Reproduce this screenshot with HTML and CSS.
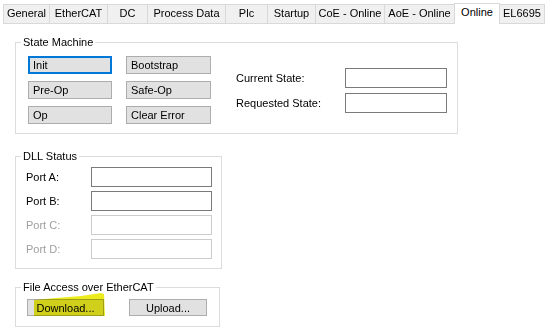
FILE: index.html
```html
<!DOCTYPE html>
<html>
<head>
<meta charset="utf-8">
<link rel="stylesheet" href="styles.css">
</head>
<body>
<div class="tabs">
  <div class="tab t1">General</div>
  <div class="tab t2">EtherCAT</div>
  <div class="tab t3">DC</div>
  <div class="tab t4">Process Data</div>
  <div class="tab t5">Plc</div>
  <div class="tab t6">Startup</div>
  <div class="tab t7">CoE - Online</div>
  <div class="tab t8">AoE - Online</div>
  <div class="tab t9 active">Online</div>
  <div class="tab t10">EL6695</div>
</div>
<div class="panel">
  <fieldset class="group sm">
    <legend>State Machine</legend>
    <div class="sm-body">
      <div class="btn-grid">
        <button class="btn focus">Init</button>
        <button class="btn">Bootstrap</button>
        <button class="btn">Pre-Op</button>
        <button class="btn">Safe-Op</button>
        <button class="btn">Op</button>
        <button class="btn">Clear Error</button>
      </div>
      <div class="state-grid">
        <span class="lbl">Current State:</span><span class="box"></span>
        <span class="lbl">Requested State:</span><span class="box"></span>
      </div>
    </div>
  </fieldset>
  <fieldset class="group dll">
    <legend>DLL Status</legend>
    <div class="port-grid">
      <span class="lbl">Port A:</span><span class="box"></span>
      <span class="lbl">Port B:</span><span class="box"></span>
      <span class="lbl dis">Port C:</span><span class="box dis"></span>
      <span class="lbl dis">Port D:</span><span class="box dis"></span>
    </div>
  </fieldset>
  <fieldset class="group fa">
    <legend>File Access over EtherCAT</legend>
    <div class="fa-row">
      <button class="btn center dl">Download...</button>
      <button class="btn center ul">Upload...</button>
    </div>
    <svg class="marker" width="80" height="30" viewBox="0 0 80 30">
      <polygon points="3,11 25,9 50,7 70,4 73,5 74,27 3,27" fill="#e8e800" opacity="0.88"/>
    </svg>
  </fieldset>
</div>
</body>
</html>
```
FILE: styles.css
```css
* { box-sizing: border-box; }
html, body { margin: 0; padding: 0; background: #ffffff; }
body {
  width: 554px;
  height: 333px;
  overflow: hidden;
  font-family: "Liberation Sans", Arial, sans-serif;
  font-size: 11px;
  color: #000;
}
.tabs {
  display: flex;
  align-items: flex-end;
  height: 24px;
  padding-left: 3px;
}
.tab {
  height: 20px;
  margin-left: -1px;
  border: 1px solid #d9d9d9;
  background: #f0f0f0;
  text-align: center;
  line-height: 17px;
  white-space: nowrap;
}
.tab:first-child { margin-left: 0; }
.t1 { width: 47px; }
.t2 { width: 59px; }
.t3 { width: 41px; }
.t4 { width: 79px; }
.t5 { width: 43px; }
.t6 { width: 49px; }
.t7 { width: 70px; }
.t8 { width: 71px; }
.t9 { width: 46px; }
.t10 { width: 46px; }
.tab.active {
  position: relative;
  height: 21px;
  background: #fff;
  border-bottom: none;
  line-height: 16px;
  z-index: 1;
}
.panel {
  padding: 12px 0 0 15px;
  display: flex;
  flex-direction: column;
  align-items: flex-start;
}
.group {
  margin: 0;
  border: 1px solid #dcdcdc;
  min-width: 0;
  position: relative;
}
.group legend {
  padding: 0 2px;
  line-height: 13px;
  height: 13px;
}
.sm {
  width: 443px;
  padding: 7px 12px 9px 12px;
}
.sm legend { margin-left: -7px; }
.sm-body {
  display: flex;
  align-items: center;
}
.btn-grid {
  display: grid;
  grid-template-columns: 84px 85px;
  column-gap: 14px;
  row-gap: 7px;
}
.btn {
  font: inherit;
  color: #000;
  height: 18px;
  padding: 0 4px;
  margin: 0;
  background: #e1e1e1;
  border: 1px solid #adadad;
  text-align: left;
  line-height: 15px;
}
.btn.focus {
  border: 2px solid #0078d7;
  padding-left: 3px;
}
.btn.center { text-align: center; }
.state-grid {
  margin-left: 25px;
  display: grid;
  grid-template-columns: 109px 102px;
  row-gap: 5px;
  align-items: center;
}
.box {
  display: block;
  height: 20px;
  border: 1px solid #7a7a7a;
  background: #fff;
}
.box.dis { border-color: #cccccc; }
.lbl.dis { color: #a0a0a0; }
.dll {
  width: 207px;
  margin-top: 16px;
  padding: 4px 9px 9px 10px;
}
.dll legend { margin-left: -5px; }
.port-grid {
  display: grid;
  grid-template-columns: 65px 121px;
  row-gap: 4px;
  align-items: center;
}
.fa {
  width: 205px;
  margin-top: 12px;
  padding: 5px 10px 10px 11px;
}
.fa legend { margin-left: -6px; }
.fa-row {
  display: flex;
  gap: 25px;
}
.fa .btn { height: 17px; line-height: 14px; }
.dl { width: 77px; }
.ul { width: 78px; }
.marker {
  position: absolute;
  left: 15px;
  top: -5px;
  mix-blend-mode: multiply;
  pointer-events: none;
}
```
